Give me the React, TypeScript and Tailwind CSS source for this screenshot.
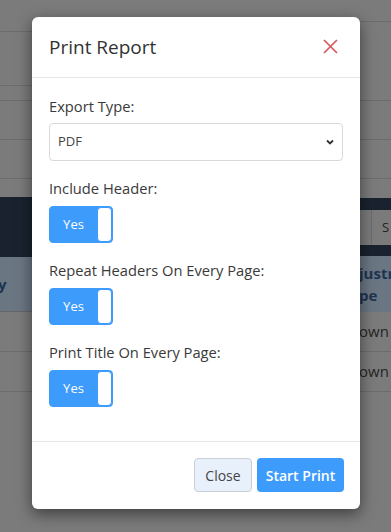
import React from "react";

function Toggle() {
  return (
    <div className="flex h-[37px] w-[64px] rounded-[4px] border border-[#3d9bfc] bg-[#3d9bfc]">
      <div className="flex flex-1 items-center justify-center text-[13px] text-white">Yes</div>
      <div className="w-[15px] rounded-[4px] border border-[#3d9bfc] bg-white"></div>
    </div>
  );
}

function Group({
  label,
  children,
  h,
  lmb,
  mb,
}: {
  label: string;
  children: React.ReactNode;
  h: string;
  lmb: string;
  mb: string;
}) {
  return (
    <div className={mb}>
      <div className={`${lmb} h-[22px] text-[14.7px] leading-[22px] text-[#3a3a3a]`}>{label}</div>
      <div className={h}>{children}</div>
    </div>
  );
}

export default function App() {
  return (
    <div
      className="relative h-[532px] w-[391px] overflow-hidden bg-[#7b7b7b]"
      style={{ fontFamily: '"Open Sans", "Noto Sans", sans-serif' }}
    >
      {/* background page */}
      <div className="flex h-full">
        <div className="flex w-[32px] flex-col">
          <div className="h-[32px] border-b border-[#6c6c6c]"></div>
          <div className="h-[54px] border-b border-[#6c6c6c]"></div>
          <div className="h-[15px] border-b border-[#6c6c6c]"></div>
          <div className="h-[39px] border-b border-[#6c6c6c]"></div>
          <div className="h-[39px] border-b border-[#6c6c6c]"></div>
          <div className="h-[18px]"></div>
          <div className="h-[60px] bg-[#19222e]"></div>
          <div className="flex h-[55px] items-center bg-[#6b7683] border-b border-[#666]">
            <span className="ml-[-2px] text-[15px] font-bold text-[#1d3450]">y</span>
          </div>
          <div className="h-[40px] border-b border-[#6c6c6c]"></div>
          <div className="h-[40px] border-b border-[#6c6c6c]"></div>
        </div>
        <div className="flex-1"></div>
        <div className="flex w-[31px] flex-col">
          <div className="h-[22px] border-b border-[#6c6c6c]"></div>
          <div className="h-[79px] border-b border-[#6c6c6c]"></div>
          <div className="h-[39px] border-b border-[#6c6c6c]"></div>
          <div className="h-[39px] border-b border-[#6c6c6c]"></div>
          <div className="h-[19px]"></div>
          <div className="h-[12px] bg-[#19222e]"></div>
          <div className="flex h-[35px]">
            <div className="w-[12px] border-r border-[#6a6a6a]"></div>
            <div className="flex items-center pl-[10px] text-[13px] text-[#222]">S</div>
          </div>
          <div className="h-[11px] bg-[#19222e]"></div>
          <div className="flex h-[56px] flex-col justify-center bg-[#6b7683] text-[15px] font-bold leading-[22px] text-[#1d3450]">
            <span className="ml-[-1px]">justr</span>
            <span className="ml-[-1px]">pe</span>
          </div>
          <div className="flex h-[40px] items-center border-b border-[#6c6c6c] text-[15px] text-[#252525]">
            <span className="ml-[-1px]">own</span>
          </div>
          <div className="flex h-[40px] items-center border-b border-[#6c6c6c] text-[15px] text-[#252525]">
            <span className="ml-[-1px]">own</span>
          </div>
        </div>
      </div>

      {/* modal */}
      <div className="absolute left-[32px] top-[17px] flex w-[328px] flex-col rounded-[6px] bg-white shadow-[0_5px_15px_rgba(0,0,0,0.5)]">
        <div className="flex items-center justify-between border-b border-[#e5e5e5] pb-4 pl-[17px] pr-[22px] pt-4">
          <div className="text-[19px] leading-[28px] text-[#333]">Print Report</div>
          <svg width="15" height="15" viewBox="0 0 15 15" className="mt-[-1px]">
            <path d="M1 1 L14 14 M14 1 L1 14" stroke="#d9585a" strokeWidth="1.7" />
          </svg>
        </div>
        <div className="px-[17px] pb-[18px] pt-[17px]">
          <Group label="Export Type:" h="h-[38px]" lmb="mb-[6px]" mb="mb-4">
            <div className="flex h-[38px] w-full items-center justify-between rounded-[4px] border border-[#d9d9d9] pl-[8px] pr-[7px]">
              <span className="text-[13px] text-[#444]">PDF</span>
              <svg width="10" height="8" viewBox="0 0 10 8">
                <path d="M2 2.5 L5 5.5 L8 2.5" stroke="#333" strokeWidth="1.8" fill="none" />
              </svg>
            </div>
          </Group>
          <Group label="Include Header:" h="h-[37px]" lmb="mb-[7px]" mb="mb-4">
            <Toggle />
          </Group>
          <Group label="Repeat Headers On Every Page:" h="h-[37px]" lmb="mb-[7px]" mb="mb-4">
            <Toggle />
          </Group>
          <Group label="Print Title On Every Page:" h="h-[37px]" lmb="mb-[7px]" mb="mb-4">
            <Toggle />
          </Group>
        </div>
        <div className="flex justify-end gap-[5px] border-t border-[#e5e5e5] px-4 pb-[17px] pt-4">
          <div className="flex h-[34px] w-[58px] items-center justify-center rounded-[4px] border border-[#c9ced6] bg-[#e8f1fb] text-[14px] text-[#444]">
            Close
          </div>
          <div className="flex h-[34px] w-[87px] items-center justify-center rounded-[4px] bg-[#3d9bfc] text-[14px] font-semibold text-white">
            Start Print
          </div>
        </div>
      </div>
    </div>
  );
}
